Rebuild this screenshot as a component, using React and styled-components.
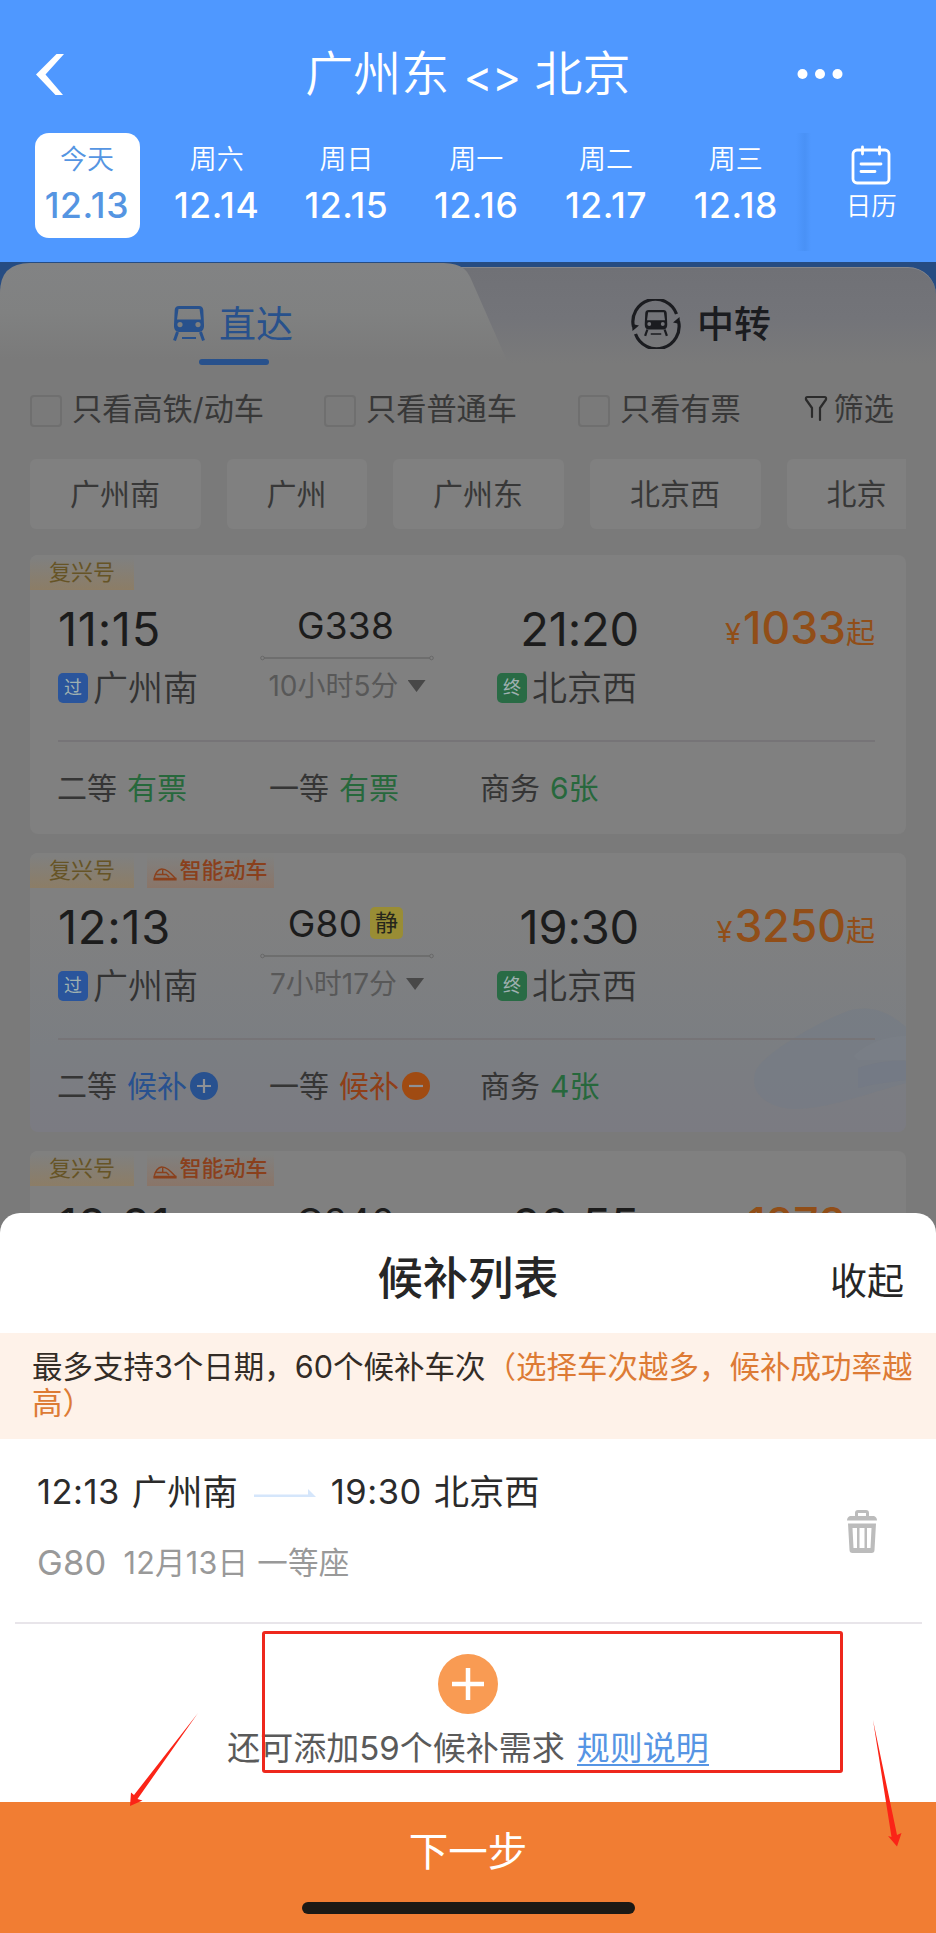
import React from "react";
import styled, { createGlobalStyle } from "styled-components";

const GlobalStyle = createGlobalStyle`
  * { box-sizing: border-box; }
  body {
    margin: 0;
    background: #fff;
    font-family: Inter, "Noto Sans CJK SC", sans-serif;
    font-weight: 380;
    line-height: 1;
  }
`;

const Screen = styled.main`
  position: relative;
  width: 936px;
  height: 1933px;
  overflow: hidden;
  white-space: nowrap;
`;

/* ---------- header ---------- */

const Header = styled.header`
  height: 262px;
  background: #4f98ff;
  color: #fff;
`;

const TitleRow = styled.div`
  display: grid;
  grid-template-columns: 140px 1fr 140px;
  align-items: center;
  height: 148px;
`;

const BackIcon = styled.svg`
  width: 28px;
  height: 41px;
  margin-left: 36px;
`;

const Title = styled.h1`
  display: flex;
  align-items: center;
  justify-content: center;
  gap: 14px;
  margin: 0;
  font-size: 48px;
  font-weight: 350;
`;

const Swap = styled.span`
  padding-top: 3px;
  font-size: 44px;
  font-weight: 380;
  letter-spacing: -0.5px;
`;

const MoreIcon = styled.svg`
  width: 46px;
  height: 12px;
  margin-left: 1px;
`;

const DateBar = styled.div`
  display: flex;
  align-items: flex-start;
  margin-top: -15px;
  padding-left: 23px;
`;

const DateCell = styled.div`
  display: flex;
  flex-direction: column;
  align-items: center;
  width: 105px;
  height: 105px;
  margin: 0 12.4px;
  padding: 13px 2px 0 0;
  border-radius: 14px;
  background: ${(p) => (p.$active ? "#fff" : "transparent")};
  color: ${(p) => (p.$active ? "#5595e2" : "#fff")};
`;

const Weekday = styled.span`
  font-size: 27px;
  font-weight: 350;
  line-height: 28px;
`;

const DayNumber = styled.span`
  margin-top: 14px;
  font-size: 35.5px;
  font-weight: 470;
  letter-spacing: 0.6px;
  line-height: 35px;
`;

const CalendarButton = styled.div`
  display: flex;
  flex-direction: column;
  align-items: center;
  flex: 1;
  height: 118px;
  padding: 12px 0 0 0;
  margin-left: -6px;
  background: linear-gradient(90deg, rgba(60, 130, 225, 0), rgba(60, 130, 225, 0.3) 9px, rgba(60, 130, 225, 0) 15px);
  font-size: 25.5px;
  font-weight: 350;
`;

const CalendarIcon = styled.svg`
  width: 40px;
  height: 40px;
  margin-left: 11px;
`;

const CalendarLabel = styled.span`
  margin: 8px 0 0 11px;
`;

/* ---------- results (dimmed) ---------- */

const Results = styled.section`
  height: 971px;
  overflow: hidden;
  background: #7a7a7a;
`;

const TabBar = styled.div`
  position: relative;
  z-index: 0;
  display: flex;
  height: 110px;
  background: linear-gradient(#264c82 40px, #7a7a7a 40px);
  &::before {
    content: "";
    position: absolute;
    z-index: -1;
    inset: 5px 0 0 0;
    border-top: 1px solid #87888c;
    border-radius: 28px 28px 0 0;
    background: linear-gradient(#707176, #737479 50px, #7a7a7a 96px);
  }
  &::after {
    content: "";
    position: absolute;
    z-index: -1;
    inset: 1px 0 0 0;
    background: linear-gradient(#828384, #808181 50px, #7a7a7a 96px);
    clip-path: path("M0 109 V30 Q0 0 30 0 H440 C460 0 466 5 471 16 L512 109 Z");
  }
`;

const Tab = styled.div`
  display: flex;
  flex-direction: column;
  align-items: center;
  flex: 1;
  padding-top: 30px;
  color: ${(p) => (p.$active ? "#28518c" : "#1b1c20")};
`;

const TabLabel = styled.div`
  display: flex;
  align-items: center;
  gap: ${(p) => p.$gap}px;
  height: 64px;
  padding-right: 2px;
  font-size: 37px;
  font-weight: ${(p) => p.$weight};
`;

const TabUnderline = styled.div`
  width: 70px;
  height: 6px;
  margin-top: 3px;
  border-radius: 3px;
  background: #28518c;
`;

const TrainIcon = styled.svg`
  width: 32px;
  height: 36px;
`;

const TransferIcon = styled.svg`
  width: 50px;
  height: 50px;
`;

const FilterRow = styled.div`
  display: flex;
  align-items: center;
  height: 74px;
  padding: 0 42px 0 30px;
  color: #383838;
  font-size: 30.2px;
`;

const CheckOption = styled.label`
  display: flex;
  align-items: center;
  gap: 10px;
  width: ${(p) => p.$width}px;
`;

const CheckBox = styled.span`
  width: 32px;
  height: 32px;
  margin-top: 3px;
  border: 2px solid #6f6f6f;
  border-radius: 4px;
`;

const FilterButton = styled.div`
  display: flex;
  align-items: center;
  gap: 6px;
  margin-left: auto;
`;

const FunnelIcon = styled.svg`
  width: 24px;
  height: 28px;
`;

const ChipRow = styled.div`
  display: flex;
  gap: 26px;
  height: 70px;
  margin: 13px 30px 26px;
  overflow: hidden;
`;

const Chip = styled.div`
  display: flex;
  flex: none;
  align-items: center;
  justify-content: center;
  width: ${(p) => p.$width}px;
  padding-right: 1px;
  border-radius: 6px;
  background: #808080;
  color: #383838;
  font-size: 30px;
`;

const Card = styled.article`
  position: relative;
  z-index: 0;
  height: 279px;
  margin: 0 30px 19px;
  overflow: hidden;
  border-radius: 8px;
  background: ${(p) => (p.$tinted ? "linear-gradient(#808080 20%, #7b7e82 70%, #7b7b82)" : "#808080")};
`;

const Tags = styled.div`
  display: flex;
  gap: 13px;
  height: 35px;
`;

const Tag = styled.span`
  display: flex;
  align-items: center;
  justify-content: center;
  gap: 2px;
  width: ${(p) => (p.$smart ? 127 : 104)}px;
  padding-bottom: 2px;
  background: ${(p) => (p.$smart ? "linear-gradient(#80807f 10%, #8a7568)" : "linear-gradient(#80807f 10%, #8c7d66)")};
  color: ${(p) => (p.$smart ? "#8a401c" : "#665426")};
  font-size: 22px;
  font-weight: ${(p) => (p.$smart ? 500 : 400)};
`;

const BulletIcon = styled.svg`
  width: 24px;
  height: 13px;
  margin-top: 9px;
`;

const Trip = styled.div`
  display: grid;
  grid-template-columns: 141px 176px 142px 1fr;
  column-gap: 60px;
  height: 152px;
  margin: 0 31px 0 28px;
  padding-top: 14px;
  border-bottom: 2px solid #767477;
`;

const Stop = styled.div`
  display: flex;
  flex-direction: column;
  align-items: ${(p) => (p.$end ? "flex-end" : "flex-start")};
`;

const Clock = styled.span`
  margin-right: ${(p) => (p.$end ? -2 : 0)}px;
  color: #1c1c1c;
  font-size: 47px;
  font-weight: 430;
  letter-spacing: ${(p) => (p.$end ? -0.2 : 0.7)}px;
  line-height: 50px;
`;

const Station = styled.span`
  display: flex;
  align-items: center;
  gap: 5px;
  margin-top: 16px;
  color: #333;
  font-size: 35px;
  font-weight: 350;
  line-height: 36px;
`;

const StopBadge = styled.span`
  display: flex;
  align-items: center;
  justify-content: center;
  width: 30px;
  height: 30px;
  border-radius: 5px;
  background: ${(p) => (p.$end ? "#296b45" : "#2a559c")};
  color: #9fb0b0;
  font-size: 18px;
  font-weight: 400;
`;

const Service = styled.div`
  display: flex;
  flex-direction: column;
  align-items: center;
`;

const TrainNo = styled.span`
  display: flex;
  align-items: center;
  gap: 8px;
  height: 42px;
  padding-right: 3px;
  color: #1c1c1c;
  font-size: 37px;
  font-weight: 430;
  letter-spacing: 0.2px;
`;

const QuietBadge = styled.span`
  display: flex;
  align-items: center;
  justify-content: center;
  width: 33px;
  height: 32px;
  border-radius: 5px;
  background: #998d35;
  color: #26261c;
  font-size: 23px;
`;

const RouteLine = styled.svg`
  width: 176px;
  height: 6px;
  margin-top: 9px;
`;

const Duration = styled.span`
  display: flex;
  align-items: center;
  gap: 9px;
  margin-top: 9px;
  color: #585858;
  font-size: 28px;
  line-height: 32px;
`;

const DownArrow = styled.span`
  width: 18px;
  height: 12px;
  background: #484848;
  clip-path: polygon(0 0, 100% 0, 50% 100%);
`;

const Price = styled.div`
  display: flex;
  align-items: baseline;
  justify-content: flex-end;
  color: #914e18;
  font-size: 29px;
  font-weight: 400;
  line-height: 48px;
`;

const Amount = styled.span`
  margin-left: 2px;
  font-size: 44.5px;
  font-weight: 450;
`;

const Seats = styled.div`
  display: grid;
  grid-template-columns: 212px 211px 212px;
  align-items: center;
  height: 92px;
  padding-left: 27px;
  font-size: 30px;
`;

const Seat = styled.div`
  display: flex;
  align-items: center;
  color: #353535;
`;

const seatTones = { green: "#27683c", blue: "#28518f", orange: "#8f3f18" };

const SeatState = styled.span`
  margin-left: 10px;
  color: ${(p) => seatTones[p.$tone]};
`;

const SeatToggle = styled.svg`
  width: 28px;
  height: 28px;
  margin-left: 3px;
`;

const TrainArt = styled.svg`
  position: absolute;
  z-index: -1;
  right: 0;
  bottom: 20px;
  width: 152px;
  height: 104px;
`;

/* ---------- waitlist sheet ---------- */

const Sheet = styled.section`
  position: relative;
  height: 589px;
  margin-top: -20px;
  border-radius: 20px 20px 0 0;
  background: #fff;
`;

const SheetHead = styled.div`
  display: grid;
  grid-template-columns: 1fr auto 1fr;
  align-items: center;
  height: 120px;
  padding: 11px 32px 0;
  color: #262626;
`;

const SheetTitle = styled.h2`
  grid-column: 2;
  margin: 0;
  font-size: 45.3px;
  font-weight: 500;
`;

const Collapse = styled.span`
  justify-self: end;
  margin-top: 5px;
  font-size: 37px;
`;

const Notice = styled.p`
  height: 106px;
  margin: 0;
  padding: 16px 0 0 32px;
  background: #fef2e9;
  color: #332c26;
  font-size: 30.5px;
  line-height: 36px;
`;

const Hint = styled.span`
  color: #dd7b35;
`;

const Entry = styled.div`
  display: flex;
  align-items: center;
  justify-content: space-between;
  height: 185px;
  margin: 0 14px 0 15px;
  padding: 0 45px 5px 22px;
  border-bottom: 2px solid #e8e5ea;
`;

const EntryRoute = styled.div`
  display: flex;
  align-items: center;
  height: 44px;
  color: #2b2b2b;
  font-size: 35.3px;
`;

const EntryTime = styled.span`
  margin-right: 12px;
  font-size: 34.5px;
  letter-spacing: 0.5px;
`;

const EntryArrow = styled.svg`
  width: 62px;
  height: 10px;
  margin: 0 15px 0 16px;
`;

const EntryDetail = styled.div`
  display: flex;
  align-items: center;
  gap: 17px;
  height: 44px;
  margin-top: 27px;
  color: #999;
  font-size: 30.5px;
  letter-spacing: 0.25px;
`;

const EntryTrain = styled.span`
  font-size: 34.5px;
`;

const TrashIcon = styled.svg`
  width: 30px;
  height: 43px;
  margin-top: 6px;
`;

const AddArea = styled.div`
  display: flex;
  flex-direction: column;
  align-items: center;
  padding-top: 30px;
`;

const AddIcon = styled.svg`
  width: 60px;
  height: 60px;
`;

const AddText = styled.div`
  display: flex;
  gap: 12px;
  margin-top: 15px;
  color: #5a5a5a;
  font-size: 33px;
  line-height: 38px;
`;

const RulesLink = styled.span`
  height: 37px;
  border-bottom: 2px solid #5695e4;
  color: #5695e4;
`;

const Footer = styled.footer`
  display: flex;
  flex-direction: column;
  align-items: center;
  height: 131px;
  background: #f17d33;
  color: #fff;
`;

const NextLabel = styled.span`
  height: 100px;
  font-size: 39.5px;
  line-height: 100px;
`;

const HomeIndicator = styled.div`
  width: 333px;
  height: 12px;
  border-radius: 6px;
  background: #1c1915;
`;

/* ---------- red annotations over the page ---------- */

const MarkBox = styled.div`
  position: absolute;
  left: 262px;
  top: 1631px;
  width: 581px;
  height: 142px;
  border: 3px solid #ee281d;
  border-radius: 3px;
`;

const MarkArrow = styled.svg`
  position: absolute;
  left: ${(p) => p.$x}px;
  top: ${(p) => p.$y}px;
`;

const dates = [
  ["今天", "12.13"],
  ["周六", "12.14"],
  ["周日", "12.15"],
  ["周一", "12.16"],
  ["周二", "12.17"],
  ["周三", "12.18"],
];

const stations = [
  ["广州南", 171],
  ["广州", 140],
  ["广州东", 171],
  ["北京西", 171],
  ["北京", 140],
];

const trains = [
  {
    no: "G338", from: "11:15", to: "21:20", time: "10小时5分", price: "1033",
    seats: [
      { name: "二等", state: "有票", tone: "green" },
      { name: "一等", state: "有票", tone: "green" },
      { name: "商务", state: "6张", tone: "green" },
    ],
  },
  {
    no: "G80", from: "12:13", to: "19:30", time: "7小时17分", price: "3250", smart: true, quiet: true,
    seats: [
      { name: "二等", state: "候补", tone: "blue", toggle: "plus" },
      { name: "一等", state: "候补", tone: "orange", toggle: "minus" },
      { name: "商务", state: "4张", tone: "green" },
    ],
  },
  { no: "G340", from: "12:21", to: "22:55", price: "1272", smart: true, covered: true, seats: [] },
];

function TrainBody() {
  return (
    <>
      <path fillRule="evenodd" d="M6 0h20c2.600 0 4 1.500 4.300 4L31 19c.200 4-1.500 7-5 7H6c-3.500 0-5.200-3-5-7L1.700 4C2 1.500 3.400 0 6 0zM5.500 3 4 13.500h24L26.500 3zM7 16a2.600 2.600 0 1 0 0 5.200 2.600 2.600 0 0 0 0-5.200zm18 0a2.600 2.600 0 1 0 0 5.200 2.600 2.600 0 0 0 0-5.200z" fill="currentColor" stroke="none" />
      <path d="M4.500 26 1.500 34.500M27.500 26 30.500 34.500" stroke="currentColor" strokeWidth="3" />
      <path d="M9 32h14" stroke="currentColor" strokeWidth="2" />
    </>
  );
}

function TrainCard({ train }) {
  return (
    <Card $tinted={train.quiet}>
      {train.quiet && (
        <TrainArt viewBox="0 0 152 104" fill="none">
          <path d="M2 62C12 44 64 14 94 3c24-7 42 2 58 16v56C112 86 70 102 38 101 12 99-6 84 2 62z" fill="#757b85" fillOpacity=".6" />
          <path d="M100 48c14-14 32-20 52-20v24H104z" fill="#7e858a" fillOpacity=".35" />
          <path d="M104 60c18-6 34-8 48-7v19c-16 2-32 4-48 8z" fill="#727886" fillOpacity=".5" />
        </TrainArt>
      )}
      <Tags>
        <Tag>复兴号</Tag>
        {train.smart && (
          <Tag $smart>
            <BulletIcon viewBox="0 0 25 14" fill="none" stroke="#8a401c" strokeWidth="1.500">
              <path d="M1 10.500C2 6 5 1 9 1c5 0 9 4 15 10.500" />
              <path d="M3 7h11l3 3M10 2v5" />
              <path d="M0 12h25" strokeWidth="2.800" />
            </BulletIcon>
            智能动车
          </Tag>
        )}
      </Tags>
      <Trip>
        <Stop>
          <Clock>{train.from}</Clock>
          {!train.covered && <Station><StopBadge>过</StopBadge>广州南</Station>}
        </Stop>
        <Service>
          <TrainNo>{train.no}{train.quiet && <QuietBadge>静</QuietBadge>}</TrainNo>
          <RouteLine viewBox="0 0 176 6" fill="none" stroke="#686868">
            <path d="M5 3h166" strokeWidth="1.500" />
            <circle cx="3.500" cy="3" r="1.800" />
            <circle cx="172.500" cy="3" r="1.800" />
          </RouteLine>
          {!train.covered && <Duration>{train.time}<DownArrow /></Duration>}
        </Service>
        <Stop $end>
          <Clock $end>{train.to}</Clock>
          {!train.covered && <Station><StopBadge $end>终</StopBadge>北京西</Station>}
        </Stop>
        <Price>¥<Amount>{train.price}</Amount>起</Price>
      </Trip>
      <Seats>
        {train.seats.map((seat) => (
          <Seat key={seat.name}>
            {seat.name}
            <SeatState $tone={seat.tone}>{seat.state}</SeatState>
            {seat.toggle && (
              <SeatToggle viewBox="0 0 28 28">
                <circle cx="14" cy="14" r="14" fill={seat.toggle === "plus" ? "#28518f" : "#a04b12"} />
                <path d={seat.toggle === "plus" ? "M7 14h14M14 7v14" : "M7 14h14"} stroke="#8e9196" strokeWidth="2.200" />
              </SeatToggle>
            )}
          </Seat>
        ))}
      </Seats>
    </Card>
  );
}

export default function App() {
  return (
    <Screen>
      <GlobalStyle />
      <Header>
        <TitleRow>
          <BackIcon viewBox="0 0 28 41">
            <path d="M20.500 0H28L9.500 20.500 27 41h-7.500L0 20.500z" fill="#fff" />
          </BackIcon>
          <Title>广州东<Swap>&lt;&gt;</Swap>北京</Title>
          <MoreIcon viewBox="0 0 46 12" fill="#fff">
            <circle cx="5.500" cy="6" r="5" />
            <circle cx="23" cy="6" r="5" />
            <circle cx="40.500" cy="6" r="5" />
          </MoreIcon>
        </TitleRow>
        <DateBar>
          {dates.map(([week, day], i) => (
            <DateCell key={day} $active={i === 0}>
              <Weekday>{week}</Weekday>
              <DayNumber>{day}</DayNumber>
            </DateCell>
          ))}
          <CalendarButton>
            <CalendarIcon viewBox="0 0 40 40" fill="none" stroke="#fff" strokeWidth="2.800" strokeLinecap="round">
              <rect x="2" y="5" width="36" height="33" rx="4" />
              <path d="M11.500 2v7M28.500 2v7" />
              <path d="M10 19h20M10 26.500h14" />
            </CalendarIcon>
            <CalendarLabel>日历</CalendarLabel>
          </CalendarButton>
        </DateBar>
      </Header>

      <Results>
        <TabBar>
          <Tab $active>
            <TabLabel $gap={14} $weight={400}>
              <TrainIcon viewBox="0 0 32 36"><TrainBody /></TrainIcon>
              直达
            </TabLabel>
            <TabUnderline />
          </Tab>
          <Tab>
            <TabLabel $gap={16} $weight={500}>
              <TransferIcon viewBox="0 0 50 50" fill="none" stroke="currentColor" strokeWidth="3.200">
                <path d="M45.500 15A22.500 22.500 0 0 0 2.500 28" />
                <path d="M4.500 35A22.500 22.500 0 0 0 47.500 22" />
                <path d="M1.500 32 1 25l7 1.500zM48.500 18 49 25l-7-1.500z" fill="currentColor" stroke="none" />
                <g transform="translate(13 11) scale(.75)"><TrainBody /></g>
              </TransferIcon>
              中转
            </TabLabel>
          </Tab>
        </TabBar>
        <FilterRow>
          <CheckOption $width={294}><CheckBox />只看高铁/动车</CheckOption>
          <CheckOption $width={254}><CheckBox />只看普通车</CheckOption>
          <CheckOption $width={170}><CheckBox />只看有票</CheckOption>
          <FilterButton>
            <FunnelIcon viewBox="0 0 24 28" fill="none" stroke="#2b2b2b" strokeWidth="2.200" strokeLinejoin="round" strokeLinecap="round">
              <path d="M8 22V13L2 4.500Q1.500 2 3.500 2h17q2 0 1.500 2.500L16 13v12" />
            </FunnelIcon>
            筛选
          </FilterButton>
        </FilterRow>
        <ChipRow>
          {stations.map(([name, width]) => (
            <Chip key={name} $width={width}>{name}</Chip>
          ))}
        </ChipRow>
        {trains.map((train) => (
          <TrainCard key={train.no} train={train} />
        ))}
      </Results>

      <Sheet>
        <SheetHead>
          <SheetTitle>候补列表</SheetTitle>
          <Collapse>收起</Collapse>
        </SheetHead>
        <Notice>
          最多支持3个日期，60个候补车次<Hint>（选择车次越多，候补成功率越<br />高）</Hint>
        </Notice>
        <Entry>
          <div>
            <EntryRoute>
              <EntryTime>12:13</EntryTime>广州南
              <EntryArrow viewBox="0 0 62 10">
                <path d="M0 6.500h54V1l8 8H0z" fill="#d5e6fb" />
              </EntryArrow>
              <EntryTime>19:30</EntryTime>北京西
            </EntryRoute>
            <EntryDetail>
              <EntryTrain>G80</EntryTrain>12月13日 一等座
            </EntryDetail>
          </div>
          <TrashIcon viewBox="0 0 30 43">
            <path fillRule="evenodd" fill="#bcbcbc" d="M8 6V3q0-3 3-3h8q3 0 3 3v3h5q3 1 3 4.500H0Q0 7 3 6zM11 6h8V3h-8zM1 13.500h28l-1.500 26.500q0 3-3 3h-19q-3 0-3-3zM5.500 18l1 20h3.500V18zM12.500 18v20h5V18zM20 18v20h3.500l1-20z" />
          </TrashIcon>
        </Entry>
        <AddArea>
          <AddIcon viewBox="0 0 60 60">
            <circle cx="30" cy="30" r="30" fill="#f99b53" />
            <path d="M14 30h32M30 14v32" stroke="#fff" strokeWidth="4.500" />
          </AddIcon>
          <AddText>
            还可添加59个候补需求<RulesLink>规则说明</RulesLink>
          </AddText>
        </AddArea>
      </Sheet>

      <Footer>
        <NextLabel>下一步</NextLabel>
        <HomeIndicator />
      </Footer>

      <MarkBox />
      <MarkArrow $x={129} $y={1713} width="70" height="94" viewBox="0 0 70 94">
        <path d="M69 0 8.500 86 13.500 87.500 1 93 2 79.500 5 82z" fill="#fb2417" />
      </MarkArrow>
      <MarkArrow $x={871} $y={1720} width="32" height="128" viewBox="0 0 32 128">
        <path d="M2 0 26 115 30.500 113 26 126.500 17 116 20.500 117z" fill="#fb2417" />
      </MarkArrow>
    </Screen>
  );
}
